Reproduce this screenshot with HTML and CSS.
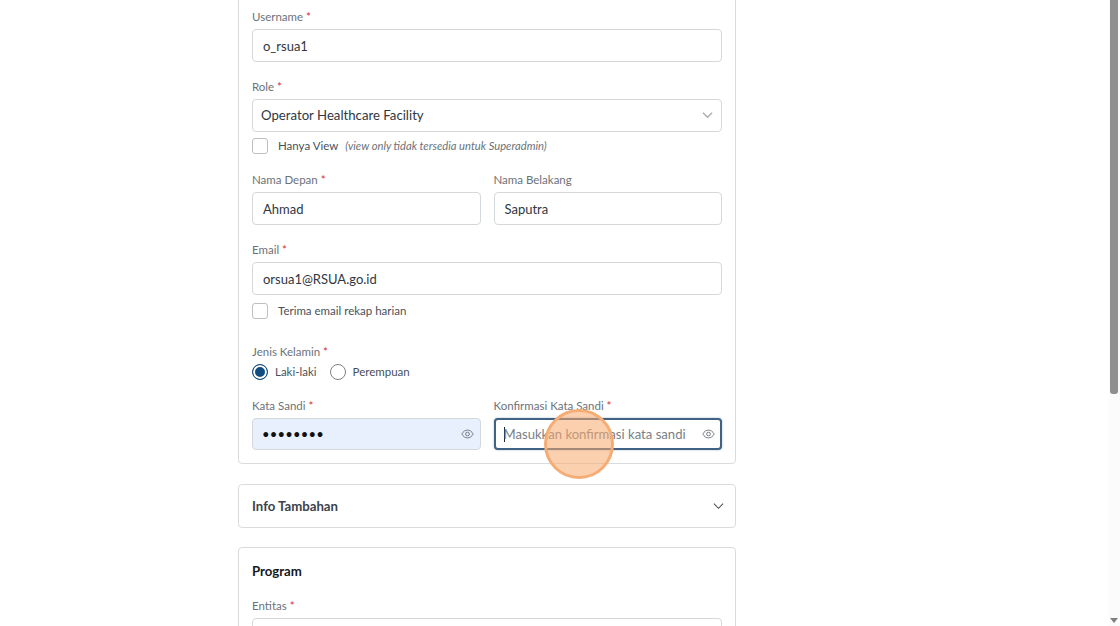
FILE: index.html
```html
<!DOCTYPE html>
<html lang="en">
<head>
    <meta charset="UTF-8">
    <meta name="viewport" content="width=device-width, initial-scale=1.0">
    <title>Tambah Pengguna</title>
    <link rel="stylesheet" href="styles.css">
</head>
<body>
    <main class="page">
        <section class="card card-account">
            <div class="field">
                <label class="label">Username <span class="req">*</span></label>
                <div class="input">o_rsua1</div>
            </div>

            <div class="field field-role">
                <label class="label">Role <span class="req">*</span></label>
                <div class="input select">
                    <span>Operator Healthcare Facility</span>
                    <svg class="chevron chevron-muted" viewBox="0 0 12 8"><path d="M1 1.5l5 5 5-5"/></svg>
                </div>
                <div class="check-row">
                    <span class="checkbox"></span>
                    <span class="check-text">Hanya View</span>
                    <em class="check-note">(view only tidak tersedia untuk Superadmin)</em>
                </div>
            </div>

            <div class="field-row field-names">
                <div class="field">
                    <label class="label">Nama Depan <span class="req">*</span></label>
                    <div class="input">Ahmad</div>
                </div>
                <div class="field">
                    <label class="label">Nama Belakang</label>
                    <div class="input">Saputra</div>
                </div>
            </div>

            <div class="field field-email">
                <label class="label">Email <span class="req">*</span></label>
                <div class="input">orsua1@RSUA.go.id</div>
                <div class="check-row">
                    <span class="checkbox"></span>
                    <span class="check-text">Terima email rekap harian</span>
                </div>
            </div>

            <div class="field field-gender">
                <label class="label">Jenis Kelamin <span class="req">*</span></label>
                <div class="radio-row">
                    <span class="radio radio-on"></span>
                    <span class="check-text">Laki-laki</span>
                    <span class="radio"></span>
                    <span class="check-text">Perempuan</span>
                </div>
            </div>

            <div class="field-row">
                <div class="field">
                    <label class="label">Kata Sandi <span class="req">*</span></label>
                    <div class="input input-filled">
                        <span class="dots">&#8226;&#8226;&#8226;&#8226;&#8226;&#8226;&#8226;&#8226;</span>
                        <svg class="eye" viewBox="0 0 16 12"><path d="M1 6c1.800-3.200 4.200-4.800 7-4.800s5.200 1.600 7 4.800c-1.800 3.200-4.200 4.800-7 4.800S2.800 9.200 1 6z"/><circle cx="8" cy="6" r="2.300"/></svg>
                    </div>
                </div>
                <div class="field">
                    <label class="label">Konfirmasi Kata Sandi <span class="req">*</span></label>
                    <div class="input input-focus">
                        <span class="caret"></span>
                        <span class="placeholder">Masukkan konfirmasi kata sandi</span>
                        <svg class="eye" viewBox="0 0 16 12"><path d="M1 6c1.800-3.200 4.200-4.800 7-4.800s5.200 1.600 7 4.800c-1.800 3.200-4.200 4.800-7 4.800S2.800 9.200 1 6z"/><circle cx="8" cy="6" r="2.300"/></svg>
                    </div>
                </div>
            </div>
        </section>

        <section class="card card-collapsed">
            <h3 class="collapse-title">Info Tambahan</h3>
            <svg class="chevron" viewBox="0 0 12 8"><path d="M1 1.500l5 5 5-5"/></svg>
        </section>

        <section class="card card-program">
            <h2 class="card-title">Program</h2>
            <div class="field">
                <label class="label">Entitas <span class="req">*</span></label>
                <div class="input"></div>
            </div>
        </section>
    </main>

    <!-- click marker from the recording -->
    <div class="click-mark"></div>

    <div class="scrollbar">
        <div class="scroll-thumb"></div>
        <div class="scroll-down"></div>
    </div>
</body>
</html>
```

FILE: styles.css
```css
* {
    margin: 0;
    padding: 0;
    box-sizing: border-box;
}

html, body {
    height: 100%;
    overflow: hidden;
}

body {
    font-family: Lato, "Open Sans", sans-serif;
    background: #fff;
    color: #333a45;
    position: relative;
}

.page {
    width: 498px;
    margin-left: 238px;
    margin-top: -41px;
    display: flex;
    flex-direction: column;
    gap: 20px;
}

.card {
    border: 1px solid #d9dcdf;
    border-radius: 4px;
    background: #fff;
    padding: 0 13px;
}

.card-account {
    padding-top: 49px;
    padding-bottom: 13px;
}

.field {
    display: flex;
    flex-direction: column;
}

.card-account > .field {
    margin-bottom: 17.5px;
}

.label {
    font-size: 11.5px;
    line-height: 16px;
    color: #6d7278;
    margin-bottom: 4px;
}

.req {
    color: #d0313a;
}

.input {
    height: 32.5px;
    border: 1px solid #d5d8db;
    border-radius: 4px;
    background: #fff;
    padding: 1px 10px 0;
    font-size: 13px;
    white-space: nowrap;
    display: flex;
    align-items: center;
    justify-content: space-between;
    color: #2f3742;
}

.select {
    font-size: 13.2px;
    padding: 0 8px;
}

.chevron {
    width: 11px;
    height: 8px;
    fill: none;
    stroke: #4a5058;
    stroke-width: 1.200;
}

.chevron-muted {
    stroke: #a9adb2;
    stroke-width: 1.500;
}

.check-row {
    display: flex;
    align-items: center;
    height: 16px;
    margin-top: 6px;
}

.field-role .check-row {
    margin-bottom: 1px;
}

.field-email .check-row {
    margin-top: 8px;
    margin-bottom: 7.5px;
}

.checkbox {
    width: 16px;
    height: 16px;
    border: 1px solid #bcc0c4;
    border-radius: 3px;
    margin-right: 10px;
}

.check-text {
    font-size: 11.5px;
    color: #4a5058;
}

.check-note {
    font-size: 11.2px;
    color: #6d7278;
    margin-left: 7px;
}

.field-row {
    display: flex;
    gap: 13px;
}

.field-row .field {
    flex: 1;
}

.field-names {
    margin-bottom: 17.5px;
}

.card-account > .field-gender {
    margin-bottom: 0;
}

.radio-row {
    display: flex;
    align-items: center;
    height: 18px;
    margin-top: -1px;
    margin-bottom: 17px;
}

.radio {
    width: 16px;
    height: 16px;
    border: 1px solid #7d8288;
    border-radius: 50%;
    margin-right: 7px;
}

.radio-on {
    border: 1.500px solid #0f4c81;
    background: #0f4c81;
    box-shadow: inset 0 0 0 2px #fff;
}

.check-text + .radio {
    margin-left: 13px;
}

.input-filled {
    background: #e8f0fe;
    padding-right: 6px;
}

.dots {
    color: #111;
    font-size: 13px;
    letter-spacing: 0.200px;
    margin-left: -1px;
}

.input-focus {
    border: 2px solid #3f6285;
    box-shadow: 0 0 2px rgba(63, 98, 133, 0.5);
    justify-content: flex-start;
    padding-left: 8px;
    padding-right: 5px;
    font-size: 13.1px;
}

.caret {
    width: 1px;
    height: 15px;
    margin-right: -1px;
    background: #222;
}

.placeholder {
    color: #7b8086;
    flex: 1;
}

.eye {
    width: 13px;
    height: 10px;
    fill: none;
    stroke: #6a7077;
    stroke-width: 1.100;
    flex-shrink: 0;
}

.card-collapsed {
    height: 44px;
    display: flex;
    align-items: center;
    justify-content: space-between;
    padding-right: 11px;
}

.collapse-title {
    font-size: 13.2px;
    font-weight: 700;
    color: #3a424c;
}

.card-program {
    margin-top: -1px;
    padding-top: 14px;
    height: 200px;
}

.card-title {
    font-size: 13.2px;
    font-weight: 700;
    line-height: 18px;
    color: #15181c;
    margin-bottom: 18px;
}

.click-mark {
    position: absolute;
    left: 544px;
    top: 409px;
    width: 70px;
    height: 70px;
    border-radius: 50%;
    background: rgba(247, 170, 110, 0.55);
    border: 3px solid #f5ad75;
}

.scrollbar {
    position: absolute;
    top: 0;
    right: 0;
    width: 11px;
    height: 626px;
    background: #fbfbfb;
}

.scroll-thumb {
    width: 8px;
    height: 394px;
    margin-left: 1px;
    background: #8f8f8f;
    border-radius: 0 0 3px 3px;
}

.scroll-down {
    position: absolute;
    bottom: 3px;
    left: 1px;
    border-left: 4px solid transparent;
    border-right: 4px solid transparent;
    border-top: 5px solid #7f7f7f;
}
```
